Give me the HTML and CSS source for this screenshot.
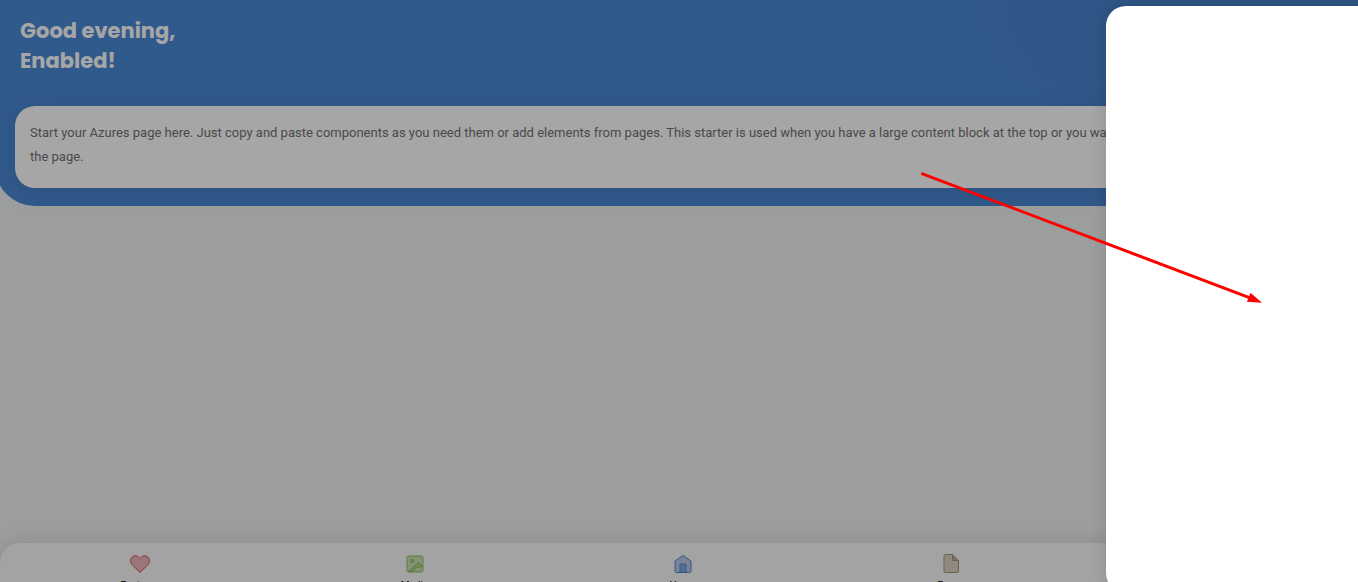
FILE: index.html
```html
<!DOCTYPE html>
<html lang="en">
<head>
  <meta charset="UTF-8">
  <meta name="viewport" content="width=device-width, initial-scale=1.0">
  <title>Azures</title>
  <link rel="stylesheet" href="styles.css">
</head>
<body>
  <div class="page">
    <header class="page-header">
      <h1 class="page-title">Good evening,<br>Enabled!</h1>
      <div class="card">
        <p>Start your Azures page here. Just copy and paste components as you need them or add elements from pages. This starter is used when you have a large content block at the top or you want<br>the page.</p>
      </div>
    </header>

    <nav class="footer-bar">
      <a href="#" class="footer-link">
        <svg class="icon icon-red" viewBox="0 0 20 20"><path d="M10 18.500L2 10.500C0 8.300 .2 5 2 3.200C4.300 1.200 7.400 1.500 9 3.400L10 4.500L11 3.400C12.600 1.500 15.700 1.200 18 3.200C19.800 5 20 8.300 18 10.500Z"/></svg>
        <span>Features</span>
      </a>
      <a href="#" class="footer-link">
        <svg class="icon icon-green" viewBox="0 0 20 20"><rect x="2" y="2" width="16" height="16" rx="2"/><circle class="fill" cx="7" cy="7" r="1.500"/><path class="fill" d="M3 17.500L13.500 8.500L18 12.500L11.500 13.500L7 17.500Z"/></svg>
        <span>Media</span>
      </a>
      <a href="#" class="footer-link">
        <svg class="icon icon-blue" viewBox="0 0 20 20"><path d="M2 7L10 1.500L18 7V17Q18 18.500 16.500 18.500H3.500Q2 18.500 2 17Z"/><path class="fill" d="M7 18.500V10H13V18.500"/></svg>
        <span>Home</span>
      </a>
      <a href="#" class="footer-link">
        <svg class="icon icon-brown" viewBox="0 0 20 20"><path d="M4.500 .5H11.500L17.500 6.500V17Q17.500 18.500 16 18.500H4.500Q3 18.500 3 17V2Q3 .5 4.500 .5Z"/><path class="fill" d="M11.500 .5V6.500H17.500Z"/></svg>
        <span>Pages</span>
      </a>
      <a href="#" class="footer-link">
        <svg class="icon icon-brown" viewBox="0 0 20 20"><circle cx="10" cy="10" r="7"/></svg>
        <span>Search</span>
      </a>
    </nav>
  </div>

  <div class="overlay"></div>
  <aside class="side-menu"></aside>

  <svg class="arrow" viewBox="0 0 340 130">
    <path class="arrow-line" d="M1.500 1.500L330 126"/>
    <path class="arrow-head" d="M328.500 120L340 130L325 129Z"/>
  </svg>
</body>
</html>
```
FILE: styles.css
```css
* {
  box-sizing: border-box;
}

body {
  margin: 0;
  font-family: Roboto, "Liberation Sans", sans-serif;
  font-size: 13px;
  line-height: 24px;
  color: #727272;
  background-color: #f0f3f1;
  overflow: hidden;
}

.page {
  display: flex;
  flex-direction: column;
  justify-content: space-between;
  height: 100vh;
}

.page-header {
  margin: 0 -5px;
  padding: 16px 20px 18px;
  border-radius: 0 0 40px 40px;
  background: radial-gradient(ellipse 240px 160px at 88% 0, #4784cf 60%, transparent), #4b8ad7;
}

.page-title {
  margin: 0 5px 30px;
  font-family: Poppins, Inter, sans-serif;
  font-size: 21px;
  font-weight: 700;
  line-height: 30px;
  color: #ffffff;
}

.card {
  padding: 15px 15px 19px;
  border-radius: 20px;
  background-color: #ffffff;
  box-shadow: 0 4px 24px rgba(0, 0, 0, 0.1);
}

.card p {
  margin: 0;
}

/* the bar hangs below the window, only its top is in view */
.footer-bar {
  display: flex;
  flex-shrink: 0;
  height: 60px;
  margin-bottom: -21px;
  padding-top: 11px;
  border-radius: 20px 20px 0 0;
  background-color: #fafafa;
  box-shadow: 0 0 20px rgba(0, 0, 0, 0.12);
}

.footer-link {
  flex: 1 1 auto;
  display: flex;
  flex-direction: column;
  align-items: center;
  gap: 3px;
  font-size: 10px;
  font-weight: 500;
  line-height: 18px;
  color: #1f1f1f;
  text-decoration: none;
}

.icon {
  width: 20px;
  height: 20px;
  stroke-width: 1;
}

.icon .fill {
  fill-opacity: 0.5;
}

.icon-red {
  fill: #edb6bd;
  stroke: #da4453;
}

.icon-green {
  fill: #cfe0be;
  stroke: #8cc152;
}

.icon-blue {
  fill: #bccbe4;
  stroke: #4a89dc;
}

.icon-brown {
  fill: #dcd3c8;
  stroke: #aa9578;
}

.icon-green .fill {
  fill: #8cc152;
}

.icon-blue .fill {
  fill: #4a89dc;
}

.icon-brown .fill {
  fill: #a08b6d;
}

.overlay {
  position: fixed;
  inset: 0;
  background-color: rgba(0, 0, 0, 0.35);
}

.side-menu {
  position: fixed;
  top: 6px;
  right: -28px;
  bottom: -11px;
  width: 280px;
  border-radius: 20px;
  background-color: #ffffff;
  box-shadow: 0 0 20px rgba(0, 0, 0, 0.15);
}

.arrow {
  position: fixed;
  top: 172px;
  right: 96px;
  width: 341px;
  height: 131px;
  overflow: visible;
}

.arrow-line {
  stroke: #ff0000;
  stroke-width: 3;
  stroke-linecap: round;
}

.arrow-head {
  fill: #ff0000;
}
```
